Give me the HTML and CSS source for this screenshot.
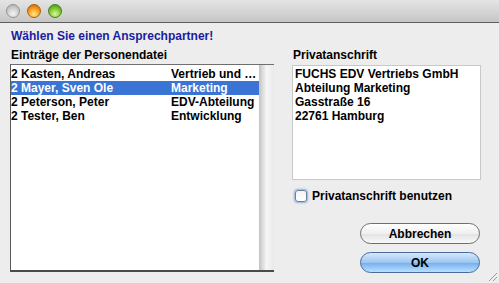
FILE: index.html
```html
<!DOCTYPE html>
<html lang="de">
<head>
    <meta charset="UTF-8">
    <title>Ansprechpartner</title>
    <link rel="stylesheet" href="styles.css">
</head>
<body>
    <div class="window">
        <div class="titlebar">
            <span class="light light-close"></span>
            <span class="light light-min"></span>
            <span class="light light-zoom"></span>
        </div>

        <div class="content">
            <p class="prompt">Wählen Sie einen Ansprechpartner!</p>

            <div class="columns">
                <!-- Personenliste -->
                <div class="left">
                    <div class="label">Einträge der Personendatei</div>
                    <div class="listbox">
                        <ul class="rows">
                            <li class="row"><span class="name">2 Kasten, Andreas</span><span class="dept">Vertrieb und …</span></li>
                            <li class="row selected"><span class="name">2 Mayer, Sven Ole</span><span class="dept">Marketing</span></li>
                            <li class="row"><span class="name">2 Peterson, Peter</span><span class="dept">EDV-Abteilung</span></li>
                            <li class="row"><span class="name">2 Tester, Ben</span><span class="dept">Entwicklung</span></li>
                        </ul>
                        <div class="scrollbar"></div>
                    </div>
                </div>

                <!-- Adresse + Aktionen -->
                <div class="right">
                    <div class="label">Privatanschrift</div>
                    <div class="address">
                        FUCHS EDV Vertriebs GmbH<br>
                        Abteilung Marketing<br>
                        Gasstraße 16<br>
                        22761 Hamburg
                    </div>
                    <label class="check">
                        <span class="box"></span>
                        Privatanschrift benutzen
                    </label>
                    <div class="buttons">
                        <button class="btn">Abbrechen</button>
                        <button class="btn btn-default">OK</button>
                    </div>
                </div>
            </div>
        </div>

        <svg class="grip" width="12" height="12" viewBox="0 0 12 12">
            <line x1="11" y1="3" x2="3" y2="11" stroke="#9a9a9a" stroke-width="1"/>
            <line x1="11" y1="7" x2="7" y2="11" stroke="#9a9a9a" stroke-width="1"/>
        </svg>
    </div>
</body>
</html>
```

FILE: styles.css
```css
body {
    margin: 0;
    background-color: #ededed;
    font-family: "Liberation Sans", Arial, sans-serif;
    font-weight: bold;
    font-size: 12px;
    color: #000;
}

.window {
    position: relative;
    width: 499px;
    height: 283px;
    overflow: hidden;
    background-color: #ededed;
}

.titlebar {
    height: 22px;
    border-bottom: 1px solid #5e5e5e;
    background: linear-gradient(#e4e4e4, #c6c6c6);
    display: flex;
    align-items: center;
    gap: 7px;
    padding-left: 6px;
}

.light {
    width: 14px;
    height: 14px;
    border-radius: 50%;
    box-sizing: border-box;
}

.light-close {
    background: radial-gradient(circle at 50% 72%, #f4f4f4, #c8c8c8 60%, #a4a4a4);
    border: 1px solid #949494;
}

.light-min {
    background: radial-gradient(circle at 50% 75%, #ffeb8c, #f5981a 55%, #c85a06);
    border: 1px solid #a8600f;
}

.light-zoom {
    background: radial-gradient(circle at 50% 75%, #dcf79c, #7ac42c 55%, #3c8810);
    border: 1px solid #44801c;
}

.content {
    padding: 6px 0 0 10px;
}

.prompt {
    margin: 0;
    line-height: 14px;
    color: #1c1ca0;
    padding-left: 1px;
}

.columns {
    display: flex;
    margin-top: 5px;
    gap: 18px;
}

.label {
    line-height: 14px;
    padding-left: 1px;
}

.left {
    width: 264px;
}

.listbox {
    margin-top: 2px;
    height: 208px;
    box-sizing: border-box;
    display: flex;
    border-top: 1px solid #6f6f6f;
    border-left: 1px solid #5a5a5a;
    border-bottom: 2px solid #4a4a4a;
    background-color: #fff;
}

.rows {
    list-style: none;
    margin: 0;
    padding: 2px 0 0;
    flex: 1;
}

.row {
    display: flex;
    height: 14px;
    line-height: 14px;
}

.row.selected {
    background-color: #3a75d5;
    color: #fff;
}

.name {
    width: 160px;
}

.dept {
    white-space: nowrap;
}

.scrollbar {
    width: 15px;
    background: linear-gradient(to right, #c2c2c2, #f6f6f6 50%, #e9e9e9);
}

.right {
    width: 189px;
    display: flex;
    flex-direction: column;
}

.address {
    margin-top: 3px;
    height: 115px;
    box-sizing: border-box;
    border: 1px solid #c8c8c8;
    background-color: #fff;
    padding: 1px 2px;
    line-height: 14px;
}

.check {
    display: flex;
    align-items: center;
    gap: 5px;
    margin-top: 9px;
    padding-left: 3px;
    line-height: 14px;
}

.box {
    width: 12px;
    height: 12px;
    box-sizing: border-box;
    border: 1px solid #6c7f9c;
    border-radius: 3px;
    background: linear-gradient(#f4f4f4, #ffffff);
    box-shadow: 0 0 2px 1px #8fb0dc;
}

.buttons {
    display: flex;
    flex-direction: column;
    align-items: flex-end;
    gap: 8px;
    margin-top: 20px;
}

.btn {
    width: 120px;
    height: 21px;
    border-radius: 11px;
    border: 1px solid #6e6e6e;
    background: linear-gradient(#ffffff, #f0f0f0 50%, #e2e2e2 51%, #f8f8f8);
    font-family: "Liberation Sans", Arial, sans-serif;
    font-weight: bold;
    font-size: 12px;
    color: #000;
    padding: 0;
    margin-right: 1px;
}

.btn-default {
    border-color: #4a6a9c;
    background: linear-gradient(#d6e8fb, #9cc6f2 50%, #74aeee 51%, #b8e0fd);
}

.grip {
    position: absolute;
    right: 1px;
    bottom: 1px;
}
```
